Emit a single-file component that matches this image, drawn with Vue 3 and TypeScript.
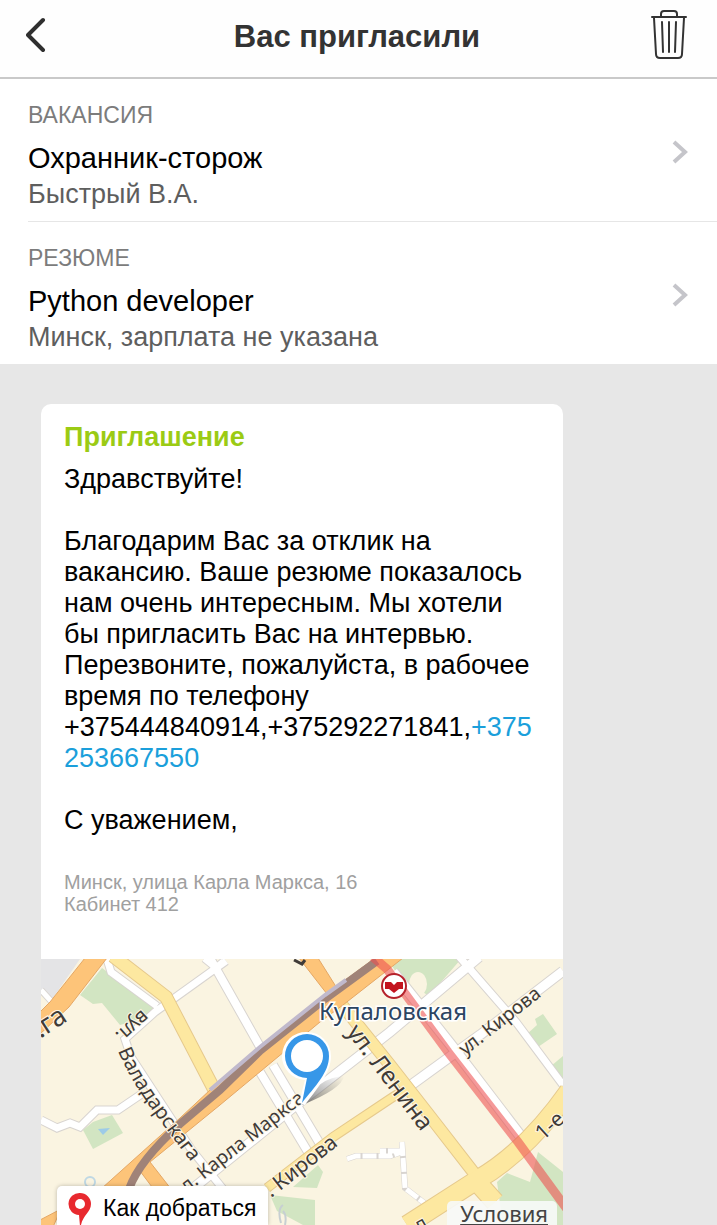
<script setup lang="ts">
interface Row {
  id: string
  label: string
  title: string
  note: string
}

const rows: Row[] = [
  { id: 'vacancy', label: 'ВАКАНСИЯ', title: 'Охранник-сторож', note: 'Быстрый В.А.' },
  { id: 'resume', label: 'РЕЗЮМЕ', title: 'Python developer', note: 'Минск, зарплата не указана' },
]
</script>

<template>
  <div class="screen">
    <header class="bar">
      <button class="icon-button" type="button" aria-label="Назад">
        <svg width="24" height="36" viewBox="3 0 24 36" fill="none" stroke="#2f2f2f" stroke-width="4" stroke-linecap="round" stroke-linejoin="round">
          <path d="M20 3 5 18 20 33" />
        </svg>
      </button>
      <h1>Вас пригласили</h1>
      <button class="icon-button" type="button" aria-label="Удалить">
        <svg width="38" height="50" viewBox="0 0 38 50" fill="none" stroke="#333" stroke-width="2" stroke-linecap="round" stroke-linejoin="round">
          <path d="M2 7H36M11 6V4Q11 1 14 1H24Q27 1 27 4V6" />
          <path d="M4 8 6 44Q6 48 10 48H28Q32 48 32 44L34 8M12 12 13 42M19 12V42M26 12 25 42" />
        </svg>
      </button>
    </header>

    <nav class="rows">
      <a v-for="row in rows" :key="row.id" class="row" :href="'#' + row.id">
        <span class="row-text">
          <span class="row-label">{{ row.label }}</span>
          <span class="row-title">{{ row.title }}</span>
          <span class="row-note">{{ row.note }}</span>
        </span>
        <svg class="chevron" width="18" height="26" viewBox="0 0 18 26" fill="none" stroke="#c5c5ca" stroke-width="4">
          <path d="M3 3 14 13 3 23" />
        </svg>
      </a>
    </nav>

    <main class="chat">
      <article class="card">
        <div class="message">
          <h2>Приглашение</h2>
          <p class="body">Здравствуйте!<br><br>Благодарим Вас за отклик на<br>вакансию. Ваше резюме показалось<br>нам очень интересным. Мы хотели<br>бы пригласить Вас на интервью.<br>Перезвоните, пожалуйста, в рабочее<br>время по телефону<br>+375444840914,+375292271841,<a href="tel:+375253667550">+375<br>253667550</a><br><br>С уважением,</p>
          <p class="address">Минск, улица Карла Маркса, 16<br>Кабинет 412</p>
        </div>

        <div class="map">
          <svg class="map-art" viewBox="0 0 522 266" preserveAspectRatio="xMidYMid slice" role="img" aria-label="Карта">
            <defs>
              <linearGradient id="shade" x1="0" y1="1" x2="1" y2="0">
                <stop offset="0" stop-color="#555" stop-opacity=".8" />
                <stop offset="1" stop-color="#777" stop-opacity="0" />
              </linearGradient>
              <path id="valadar" d="M77 92Q86 114 103 139T151 204" />
            </defs>
            <rect width="522" height="266" fill="#faf4e1" />
            <path d="M0 0H39L10 42 0 32Z" fill="#e4e4e6" />

            <g fill="#d2e5c2">
              <path d="M39 36 61 9 114 48 104 59 79 66 61 44 52 45Z" />
              <path d="M42 171 52 163 71 156 82 174 52 190Z" />
              <path d="M346 0H420L388 37 374 28 360 20Z" />
              <path d="M485 76 496 66 494 60 502 55 516 75 497 88Z" />
              <path d="M510 107 522 97V122Z" />
              <path d="M456 223 466 214 489 223 497 193 522 213V266H462Z" />
              <path d="M252 228 277 206 282 213 276 229Z" />
              <path d="M229 236 274 241V266H262L236 252Z" />
            </g>
            <ellipse cx="377" cy="25" rx="9" ry="12" fill="#faf4e1" />
            <path d="M57 170 69 169 62 176Z" fill="#9ccbe8" />

            <g fill="none" stroke="#d8d4d0" stroke-width="9">
              <path d="M0 161 16 169 29 164 39 168 56 151H77L102 134" />
              <path d="M66 0 70 13 116 47M185 2 114 53 84 80 90 98 150 190 190 240" />
              <path d="M165-8 222 93M219 113 270 198M232 106 279 185" stroke-width="10" />
              <path d="M145 235 259 143 349 73 425 9 438-2" stroke-width="11" />
              <path d="M366 129 439 76 522 12" stroke-width="11" />
              <path d="M415-6 475 63 522 126" stroke-width="9" />
              <path d="M352 13 410 86 484 183" stroke-width="12" />
              <path d="M306 200 315 197H349L361 193M361 183 364 229 386 246M361 192H339" stroke-width="6" />
              <path d="M0 31 10 42M163 0 174 9 182 2" stroke-width="7" />
            </g>
            <g fill="none" stroke="#fff" stroke-width="7">
              <path d="M0 161 16 169 29 164 39 168 56 151H77L102 134" />
              <path d="M66 0 70 13 116 47M185 2 114 53 84 80 90 98 150 190 190 240" />
              <path d="M165-8 222 93M219 113 270 198M232 106 279 185" stroke-width="8" />
              <path d="M145 235 259 143 349 73 425 9 438-2" stroke-width="9" />
              <path d="M366 129 439 76 522 12" stroke-width="9" />
              <path d="M415-6 475 63 522 126" stroke-width="7" />
              <path d="M352 13 410 86 484 183" stroke-width="10" />
              <path d="M306 200 315 197H349L361 193M361 183 364 229 386 246M361 192H339" stroke-width="5" stroke-dasharray="14 2" />
              <path d="M0 31 10 42M163 0 174 9 182 2" stroke-width="5" />
            </g>

            <g fill="none" stroke="#e6c98c">
              <path d="M72-3 125 38 176 136" stroke-width="14" />
              <path d="M301 46 349 106 395 165 440 223" stroke-width="13" />
              <path d="M226 229 292 178 349 140 366 129" stroke-width="10" />
              <path d="M528 132Q485 193 436 221L366 266M436 223 454 243" stroke-width="20" />
            </g>
            <g fill="none" stroke="#fde8a0">
              <path d="M72-3 125 38 176 136" stroke-width="12" />
              <path d="M301 46 349 106 395 165 440 223" stroke-width="11" />
              <path d="M226 229 292 178 349 140 366 129" stroke-width="8" />
              <path d="M528 132Q485 193 436 221L366 266M436 223 454 243" stroke-width="18" />
            </g>

            <g fill="#fdc479" stroke="#e4a765">
              <path d="M44-1 9 43-2 54V76L28 48 66-1Z" />
              <path d="M258-1 286 35 304 42 277-1Z" />
              <path d="M60 230 139 159 169 131 219 89 284 36 334-1H362L302 46 279 63 179 146 109 203 130 230 114 232 99 212 84 230Z" />
              <path d="M-1 268V261L20 250 12 268Z" />
            </g>
            <path d="M88 230Q98 202 139 165L179 131 219 92 284 40 336 2" fill="none" stroke="#a08378" stroke-width="8" />
            <path d="M169 131 219 88 284 36 305 21" fill="none" stroke="#c0b9cc" stroke-width="4" />
            <path d="M332-2 346 10 407 93 477 183 526 250" fill="none" stroke="#ee5050" stroke-opacity=".58" stroke-width="9" />
            <circle cx="49" cy="223" r="5" fill="none" stroke="#bfd8e4" stroke-width="2" />
            <path d="M240 264Q236 250 242 246M244 266Q246 256 242 252" fill="none" stroke="#c7cfd2" stroke-width="2" />

            <path d="M261 146Q278 118 303 117Q301 130 261 146Z" fill="url(#shade)" />

            <g class="street">
              <text transform="translate(5 76) rotate(-33)" font-size="27" x="-7">.га</text>
              <text transform="translate(101 50) rotate(138)" font-size="20">вул.</text>
              <text font-size="20"><textPath href="#valadar">Валадарскага</textPath></text>
              <text transform="translate(160 223) rotate(-38)" font-size="19" x="-18">л. Карла Маркса</text>
              <text transform="translate(230 239) rotate(-38)" font-size="21">. Кирова</text>
              <text transform="translate(424 97) rotate(-38)" font-size="19">ул. Кирова</text>
              <text transform="translate(305 73) rotate(53)" font-size="24">ул. Ленина</text>
              <text transform="translate(502 182) rotate(-42)" font-size="21">1-е</text>
              <text transform="translate(378 274) rotate(-30)" font-size="20">л</text>
            </g>
            <path d="M253 1 261 5 264 1" fill="none" stroke="#3f3b38" stroke-width="3" />
            <text class="station" x="278" y="61" font-size="24">Купаловская</text>

            <circle cx="353" cy="27" r="12" fill="#fff" stroke="#b5222b" stroke-width="2" />
            <path d="M344 23H350L353 26 356 23H362V30H358L353 34 348 30H344Z" fill="#c3141e" />

            <path d="M266 73A24 24 0 0 1 290 97C290 115 274 132 264 146L258 144 264 121A24 24 0 0 1 266 73Z" fill="#fff" />
            <path d="M266 75A22 22 0 0 1 288 97C288 114 274 127 261 144L266 119A22 22 0 0 1 266 75Z" fill="#3797e8" />
            <circle cx="266" cy="97" r="16" fill="#fff" />
          </svg>
          <button class="route" type="button">
            <svg width="24" height="34" viewBox="0 0 24 34">
              <path d="M12 1A11 11 0 0 1 23 12C23 20 15 23 13 33L12 34 11 23A11 11 0 0 1 12 1Z" fill="#e8292f" />
              <circle cx="12" cy="12" r="5" fill="#fff" />
            </svg>
            Как добраться
          </button>
          <a class="terms" href="#terms">Условия</a>
        </div>
      </article>
    </main>
  </div>
</template>

<style>
body {
  background: #e7e7e7;
}
</style>

<style scoped>
.screen {
  font-family: "Liberation Sans", Arial, sans-serif;
  color: #000;
}

.bar {
  display: flex;
  align-items: center;
  justify-content: space-between;
  min-height: 69px;
  padding: 0 29px 8px 26px;
  border-bottom: 2px solid #c9c9c9;
  background: #fefefe;
}

.bar h1 {
  margin: 0;
  padding-top: 4px;
  font-size: 31px;
  line-height: 36px;
  color: #333;
}

.icon-button {
  display: flex;
  width: 38px;
  padding: 0;
  border: 0;
  background: none;
}

.rows {
  background: #fff;
}

.row {
  display: flex;
  align-items: center;
  justify-content: space-between;
  margin-left: 28px;
  padding: 23px 28px 9px 0;
  color: inherit;
  text-decoration: none;
}

.row + .row {
  border-top: 1px solid #e6e6e6;
}

.row-text {
  display: flex;
  flex-direction: column;
}

.row-label {
  margin-bottom: 12px;
  font-size: 23px;
  line-height: 26px;
  color: #7c7c7c;
}

.row-title {
  font-size: 29px;
  line-height: 36px;
}

.row-note {
  font-size: 27px;
  line-height: 36px;
  color: #5e5e5e;
}

.chevron {
  margin-bottom: 10px;
}

.chat {
  padding: 40px 154px 0 41px;
}

.card {
  overflow: hidden;
  border-radius: 10px 10px 0 0;
  background: #fff;
}

.message {
  padding: 17px 24px 44px 23px;
}

.message h2 {
  margin: 0 0 11px;
  font-size: 27px;
  line-height: 32px;
  color: #9bcb14;
}

.body {
  margin: 0 0 35px;
  font-size: 27px;
  line-height: 31px;
  white-space: nowrap;
}

.body a {
  color: #1b9fdb;
  text-decoration: none;
}

.address {
  margin: 0;
  font-size: 20px;
  line-height: 22px;
  color: #a0a0a0;
}

.map {
  position: relative;
  overflow: hidden;
}

.map-art {
  display: block;
  width: 100%;
}

.street {
  font-family: "Noto Sans", sans-serif;
  fill: #3f3b38;
  stroke: #fdf6e4;
  stroke-width: 2px;
  paint-order: stroke;
}

.station {
  font-family: "Noto Sans", sans-serif;
  fill: #2c4562;
  stroke: #fff;
  stroke-width: 3px;
  paint-order: stroke;
}

.route {
  position: absolute;
  bottom: 0;
  left: 16px;
  display: flex;
  align-items: center;
  gap: 11px;
  height: 39px;
  padding: 6px 11px 0;
  border: 0;
  border-radius: 5px 5px 0 0;
  background: #fff;
  box-shadow: 0 0 4px rgba(0, 0, 0, 0.25);
  font-family: inherit;
  font-size: 23px;
  color: #000;
  white-space: nowrap;
}

.terms {
  position: absolute;
  right: 6px;
  bottom: 0;
  padding: 0 9px 0 13px;
  border-radius: 5px 5px 0 0;
  background: rgba(247, 250, 248, 0.9);
  font-family: "Noto Sans", sans-serif;
  font-size: 22px;
  line-height: 24px;
  color: #444;
}
</style>
